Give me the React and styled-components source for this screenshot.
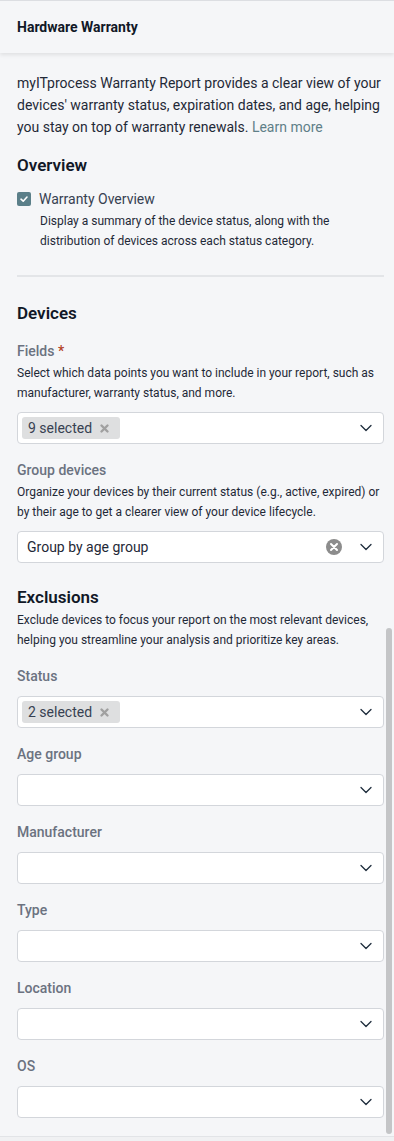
import React from 'react'
import styled, { createGlobalStyle } from 'styled-components'

const GlobalStyle = createGlobalStyle`
  body {
    margin: 0;
    background: #f0f1f3;
    font-family: Roboto, "Liberation Sans", sans-serif;
    color: #1f2937;
  }
`

const Panel = styled.div`
  position: relative;
  height: 1137px;
  overflow: hidden;
  background: #f5f6f8;
  border-top: 1px solid #dcdee2;
  border-bottom: 1px solid #e2e4e7;
  box-sizing: border-box;
`

const Header = styled.div`
  height: 52px;
  display: flex;
  align-items: center;
  padding: 0 17px;
  background: #f5f6f8;
  box-shadow: 0 2px 4px rgba(0, 0, 0, 0.09);
  font-size: 14px;
  font-weight: 700;
  color: #111827;
  position: relative;
  z-index: 1;
`

const Body = styled.div`
  padding: 19px 10px 0 17px;
`

const Intro = styled.p`
  margin: 0;
  font-size: 14px;
  line-height: 22px;
  color: #1f2937;
`

const LearnMore = styled.a`
  color: #5f7f88;
  text-decoration: none;
`

const SectionTitle = styled.h3`
  margin: ${(p) => p.$top || 16}px 0 0;
  font-size: 17px;
  line-height: 22px;
  font-weight: 600;
  color: #111827;
`

const CheckRow = styled.label`
  display: flex;
  align-items: center;
  gap: 8px;
  margin-top: 13px;
  font-size: 14px;
  line-height: 20px;
  color: #374151;
`

const CheckBox = styled.span`
  width: 14px;
  height: 14px;
  border-radius: 2px;
  background: #5b7f89;
  display: flex;
  align-items: center;
  justify-content: center;
`

const CheckText = styled.p`
  margin: 2px 0 0 23px;
  font-size: 12px;
  line-height: 20px;
  color: #1f2937;
`

const Divider = styled.hr`
  margin: 24px 0 0;
  border: none;
  height: 2px;
  background: #e3e5e8;
`

const Field = styled.div`
  margin-top: ${(p) => p.$top ?? 16}px;
`

const Label = styled.div`
  font-size: 14px;
  line-height: 20px;
  font-weight: 500;
  color: #6b7280;
`

const Required = styled.span`
  color: #b3411f;
`

const Help = styled.p`
  margin: 2px 0 0;
  font-size: 12px;
  line-height: 20px;
  color: #1f2937;
`

const SelectBox = styled.div`
  margin-top: ${(p) => (p.$hasHelp ? 9 : 10)}px;
  height: 32px;
  box-sizing: border-box;
  background: #fff;
  border: 1px solid #d3d6db;
  border-radius: 4px;
  display: flex;
  align-items: center;
  padding: 0 10px 0 ${(p) => (p.$chip ? 4 : 9)}px;
`

const Value = styled.span`
  flex: 1;
  font-size: 14px;
  color: #1f2937;
`

const Chip = styled.span`
  display: flex;
  align-items: center;
  gap: 7px;
  height: 22px;
  padding: 0 10px 0 6px;
  background: #dedfe0;
  border-radius: 3px;
  font-size: 14px;
  color: #374151;
`

const Spacer = styled.span`
  flex: 1;
`

const ClearIcon = styled.span`
  display: flex;
  margin-right: 17px;
`

const Thumb = styled.div`
  position: absolute;
  right: 2px;
  top: 627px;
  bottom: 2px;
  width: 6px;
  border-radius: 3px;
  background: #c4c5c7;
`

const Chevron = () => (
  <svg width="14" height="14" viewBox="0 0 14 14" fill="none">
    <path d="M2 4.5 L7 9.5 L12 4.5" stroke="#1f2d3d" strokeWidth="1.3" strokeLinecap="round" strokeLinejoin="round" />
  </svg>
)

const SmallX = () => (
  <svg width="11" height="11" viewBox="0 0 11 11">
    <path d="M2.5 2.5 L8.5 8.5 M8.5 2.5 L2.5 8.5" stroke="#a0a0a0" strokeWidth="2.4" strokeLinecap="round" />
  </svg>
)

const CircleX = () => (
  <svg width="16" height="16" viewBox="0 0 16 16">
    <circle cx="8" cy="8" r="8" fill="#8c8c8c" />
    <path d="M5 5 L11 11 M11 5 L5 11" stroke="#fff" strokeWidth="2" strokeLinecap="round" />
  </svg>
)

const Select = ({ chip, value, clearable, hasHelp }) => (
  <SelectBox $chip={!!chip} $hasHelp={hasHelp}>
    {chip && (
      <Chip>
        {chip}
        <SmallX />
      </Chip>
    )}
    {value ? <Value>{value}</Value> : <Spacer />}
    {clearable && (
      <ClearIcon>
        <CircleX />
      </ClearIcon>
    )}
    <Chevron />
  </SelectBox>
)

const exclusions = ['Age group', 'Manufacturer', 'Type', 'Location', 'OS']

export default function App() {
  return (
    <>
      <GlobalStyle />
      <Panel>
        <Header>Hardware Warranty</Header>
        <Body>
          <Intro>
            myITprocess Warranty Report provides a clear view of your devices' warranty status,
            expiration dates, and age, helping you stay on top of warranty renewals.{' '}
            <LearnMore href="#">Learn more</LearnMore>
          </Intro>

          <SectionTitle>Overview</SectionTitle>
          <CheckRow>
            <CheckBox>
              <svg width="10" height="10" viewBox="0 0 10 10">
                <path d="M2 5.2 L4.2 7.2 L8 3" stroke="#fff" strokeWidth="1.6" fill="none" strokeLinecap="round" strokeLinejoin="round" />
              </svg>
            </CheckBox>
            Warranty Overview
          </CheckRow>
          <CheckText>
            Display a summary of the device status, along with the distribution of devices across
            each status category.
          </CheckText>
          <Divider />

          <SectionTitle $top={25}>Devices</SectionTitle>
          <Field $top={17}>
            <Label>
              Fields <Required>*</Required>
            </Label>
            <Help>
              Select which data points you want to include in your report, such as manufacturer,
              warranty status, and more.
            </Help>
            <Select chip="9 selected" hasHelp />
          </Field>
          <Field>
            <Label>Group devices</Label>
            <Help>
              Organize your devices by their current status (e.g., active, expired) or by their age
              to get a clearer view of your device lifecycle.
            </Help>
            <Select value="Group by age group" clearable hasHelp />
          </Field>

          <SectionTitle $top={23}>Exclusions</SectionTitle>
          <Help>
            Exclude devices to focus your report on the most relevant devices, helping you
            streamline your analysis and prioritize key areas.
          </Help>
          <Field>
            <Label>Status</Label>
            <Select chip="2 selected" />
          </Field>
          {exclusions.map((name) => (
            <Field key={name}>
              <Label>{name}</Label>
              <Select />
            </Field>
          ))}
        </Body>
        <Thumb />
      </Panel>
    </>
  )
}
